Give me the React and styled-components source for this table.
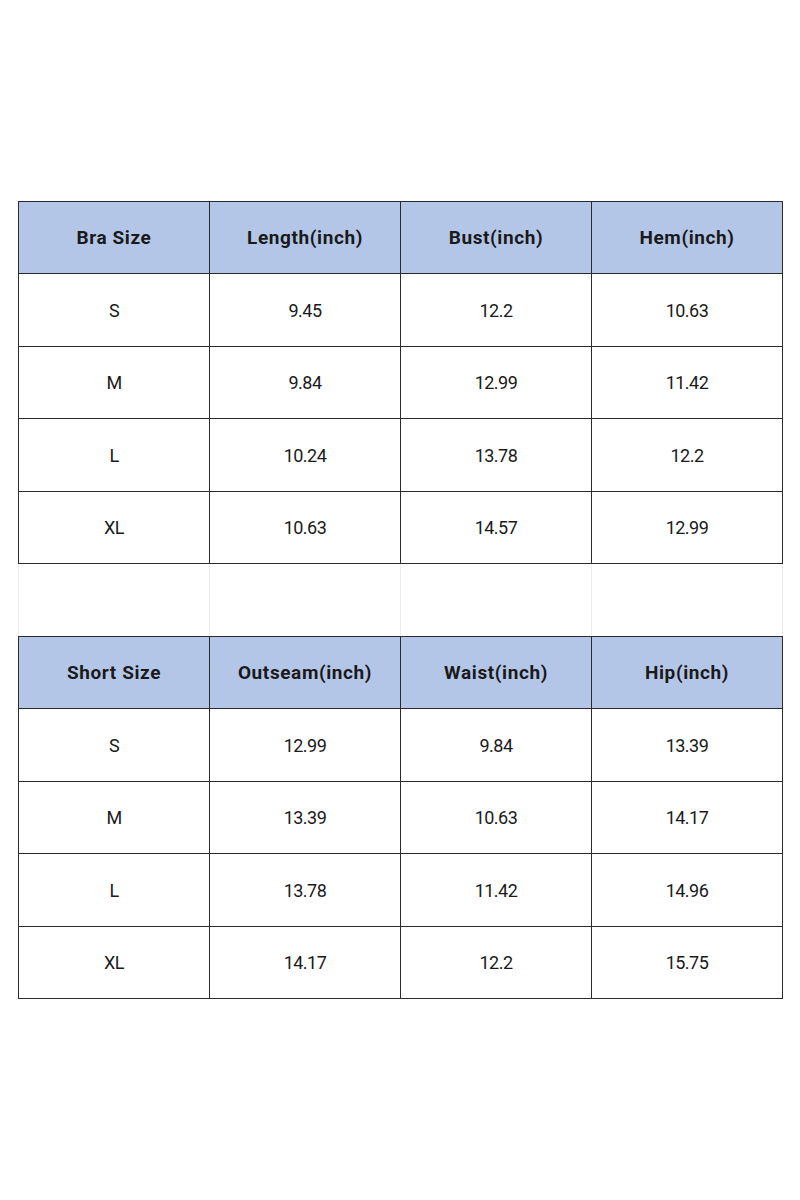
import React from "react";
import styled, { createGlobalStyle } from "styled-components";

const Global = createGlobalStyle`
  html, body { margin: 0; padding: 0; background: #fff; }
  body { font-family: Roboto, "Noto Sans", "DejaVu Sans", sans-serif; }
`;

const Page = styled.div`
  width: 800px;
  height: 1200px;
  padding: 201px 0 0 18px;
  box-sizing: border-box;
`;

const Table = styled.table`
  border-collapse: collapse;
  table-layout: fixed;
  width: 765px;
`;

const Row = styled.tr`
  height: ${(p) => p.$h}px;
`;

const Cell = styled.td`
  width: 25%;
  padding: 0;
  text-align: center;
  vertical-align: middle;
  font-size: ${(p) => (p.$head ? "19px" : "18px")};
  color: #1a1a1a;
  border: 1px solid #2b2b2b;
  background: ${(p) => (p.$head ? "#b4c6e7" : "#fff")};
  font-weight: ${(p) => (p.$head ? 700 : 400)};
  letter-spacing: ${(p) => (p.$head ? "0.6px" : "-0.5px")};
`;

const GapCell = styled.td`
  width: 25%;
  padding: 0;
  border-left: 1px solid #ececec;
  border-right: 1px solid #ececec;
  border-top: 1px solid #2b2b2b;
  border-bottom: 1px solid #2b2b2b;
`;

const tables = [
  {
    head: ["Bra Size", "Length(inch)", "Bust(inch)", "Hem(inch)"],
    rows: [
      ["S", "9.45", "12.2", "10.63"],
      ["M", "9.84", "12.99", "11.42"],
      ["L", "10.24", "13.78", "12.2"],
      ["XL", "10.63", "14.57", "12.99"],
    ],
  },
  {
    head: ["Short Size", "Outseam(inch)", "Waist(inch)", "Hip(inch)"],
    rows: [
      ["S", "12.99", "9.84", "13.39"],
      ["M", "13.39", "10.63", "14.17"],
      ["L", "13.78", "11.42", "14.96"],
      ["XL", "14.17", "12.2", "15.75"],
    ],
  },
];

export default function App() {
  let i = 0;
  const h = () => (i++ % 2 === 0 ? 72 : 73);
  return (
    <Page>
      <Global />
      <Table>
        <tbody>
          {tables.map((t, ti) => (
            <React.Fragment key={ti}>
              {ti > 0 && (
                <Row $h={h()}>
                  {[0, 1, 2, 3].map((k) => (
                    <GapCell key={k} />
                  ))}
                </Row>
              )}
              <Row $h={h()}>
                {t.head.map((c) => (
                  <Cell key={c} $head>
                    {c}
                  </Cell>
                ))}
              </Row>
              {t.rows.map((r, ri) => (
                <Row key={ri} $h={h()}>
                  {r.map((c, ci) => (
                    <Cell key={ci}>{c}</Cell>
                  ))}
                </Row>
              ))}
            </React.Fragment>
          ))}
        </tbody>
      </Table>
    </Page>
  );
}
